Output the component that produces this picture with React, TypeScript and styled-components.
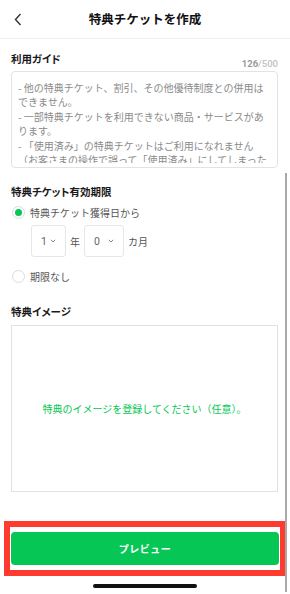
import React from "react";
import styled, { createGlobalStyle } from "styled-components";

const Global = createGlobalStyle`
  html, body { margin: 0; padding: 0; background: #fff; }
  body { font-family: "Noto Sans CJK JP", "Noto Sans", sans-serif; -webkit-font-smoothing: antialiased; }
  * { box-sizing: border-box; }
`;

const Page = styled.div`
  position: relative;
  width: 290px;
  height: 594px;
  overflow: hidden;
  background: #fff;
  display: flex;
  flex-direction: column;
`;

const Header = styled.header`
  height: 39px;
  border-bottom: 1px solid #f0f0f0;
  display: grid;
  grid-template-columns: 40px 1fr 40px;
  align-items: center;
`;

const BackButton = styled.div`
  display: flex;
  align-items: center;
  padding-left: 14px;
  height: 100%;
`;

const Title = styled.h1`
  margin: 0;
  text-align: center;
  font-size: 12.5px;
  font-weight: 700;
  color: #111;
  line-height: 18px;
`;

const Section = styled.section<{ $top: number }>`
  padding: 0 12px 0 11px;
  margin-top: ${(p) => p.$top}px;
  display: flex;
  flex-direction: column;
`;

const LabelRow = styled.div`
  display: flex;
  justify-content: space-between;
  height: 20px;
`;

const Label = styled.div`
  font-size: 10.5px;
  font-weight: 700;
  color: #1a1a1a;
  line-height: 16px;
  font-feature-settings: "palt";
`;

const Counter = styled.div`
  align-self: flex-end;
  font-size: 9.5px;
  line-height: 14px;
  color: #c2c2c2;
  font-family: "Roboto", "Noto Sans", sans-serif;
  font-weight: 500;
  b { color: #9a9a9a; font-weight: 700; }
`;

const GuideBox = styled.div`
  height: 97px;
  border: 1px solid #e3e3e3;
  border-radius: 4px;
  padding: 9px 6px 0 6px;
`;

const GuideText = styled.div`
  height: 82px;
  overflow: hidden;
  font-size: 10px;
  line-height: 14.4px;
  color: #8a8a8a;
  white-space: pre-wrap;
`;

const RadioRow = styled.div<{ $top: number }>`
  display: flex;
  align-items: center;
  gap: 5px;
  height: 18px;
  margin-top: ${(p) => p.$top}px;
  padding-left: 1px;
  font-size: 10px;
  color: #555;
`;

const RadioCircle = styled.span<{ $on?: boolean }>`
  width: 13px;
  height: 13px;
  border-radius: 50%;
  border: 1px solid #dcdcdc;
  background: #fff;
  display: flex;
  align-items: center;
  justify-content: center;
  &::after {
    content: "";
    width: 7px;
    height: 7px;
    border-radius: 50%;
    background: ${(p) => (p.$on ? "#06C755" : "transparent")};
  }
`;

const SelectRow = styled.div`
  display: flex;
  align-items: center;
  gap: 3px;
  margin-top: 4px;
  padding-left: 20px;
  font-size: 10px;
  color: #555;
`;

const SelectBox = styled.div<{ $w: number }>`
  width: ${(p) => p.$w}px;
  height: 32px;
  border: 1px solid #e6e6e6;
  border-radius: 3px;
  display: flex;
  align-items: center;
  justify-content: space-between;
  padding: 0 9px 0 9px;
  font-family: "Roboto", "Noto Sans", sans-serif;
  font-size: 10.5px;
  color: #666;
`;

const Unit = styled.span`
  padding: 0 1px;
`;

const ImageBox = styled.div`
  height: 167px;
  margin-top: 5px;
  border: 1px solid #e2e2e2;
  display: flex;
  align-items: center;
  justify-content: center;
  font-size: 10px;
  color: #06C755;
  padding-bottom: 1px;
`;

const Highlight = styled.div`
  margin: 29px 4px 0 4px;
  border: 6px solid #ff3b30;
  padding: 5px 1px;
`;

const PreviewButton = styled.button`
  width: 100%;
  height: 33px;
  border: none;
  border-radius: 4px;
  background: #06C755;
  color: #fff;
  font-family: inherit;
  font-size: 10px;
  font-weight: 700;
  letter-spacing: 0.5px;
`;

const HomeIndicator = styled.div`
  width: 104px;
  height: 4px;
  border-radius: 2px;
  background: #111;
  margin: 8px auto 0;
`;

const ScrollBar = styled.div`
  position: absolute;
  left: 285px;
  top: 173px;
  width: 2px;
  height: 419px;
  background: #a9a9a9;
`;

const Chevron = () => (
  <svg width="6" height="4" viewBox="0 0 6 4">
    <path d="M0.8 0.8 L3 3 L5.2 0.8" fill="none" stroke="#777" strokeWidth="0.9" />
  </svg>
);

const guide =
  "- 他の特典チケット、割引、その他優待制度との併用はできません。\n- 一部特典チケットを利用できない商品・サービスがあります。\n- 「使用済み」の特典チケットはご利用になれません（お客さまの操作で誤って「使用済み」にしてしまった場合も同様です）。";

export default function App() {
  return (
    <Page>
      <Global />
      <Header>
        <BackButton>
          <svg width="8" height="13" viewBox="0 0 8 13">
            <path d="M6.5 1 L1.5 6.5 L6.5 12" fill="none" stroke="#333" strokeWidth="1.4" />
          </svg>
        </BackButton>
        <Title>特典チケットを作成</Title>
        <div />
      </Header>

      <Section $top={12}>
        <LabelRow>
          <Label>利用ガイド</Label>
          <Counter>
            <b>126</b>/500
          </Counter>
        </LabelRow>
        <GuideBox>
          <GuideText>{guide}</GuideText>
        </GuideBox>
      </Section>

      <Section $top={16}>
        <Label>特典チケット有効期限</Label>
        <RadioRow $top={3}>
          <RadioCircle $on />
          特典チケット獲得日から
        </RadioRow>
        <SelectRow>
          <SelectBox $w={35}>
            1<Chevron />
          </SelectBox>
          <Unit>年</Unit>
          <SelectBox $w={40}>
            0<Chevron />
          </SelectBox>
          <Unit>カ月</Unit>
        </SelectRow>
        <RadioRow $top={10}>
          <RadioCircle />
          期限なし
        </RadioRow>
      </Section>

      <Section $top={19}>
        <Label>特典イメージ</Label>
        <ImageBox>特典のイメージを登録してください（任意）。</ImageBox>
      </Section>

      <Highlight>
        <PreviewButton>プレビュー</PreviewButton>
      </Highlight>
      <HomeIndicator />
      <ScrollBar />
    </Page>
  );
}
